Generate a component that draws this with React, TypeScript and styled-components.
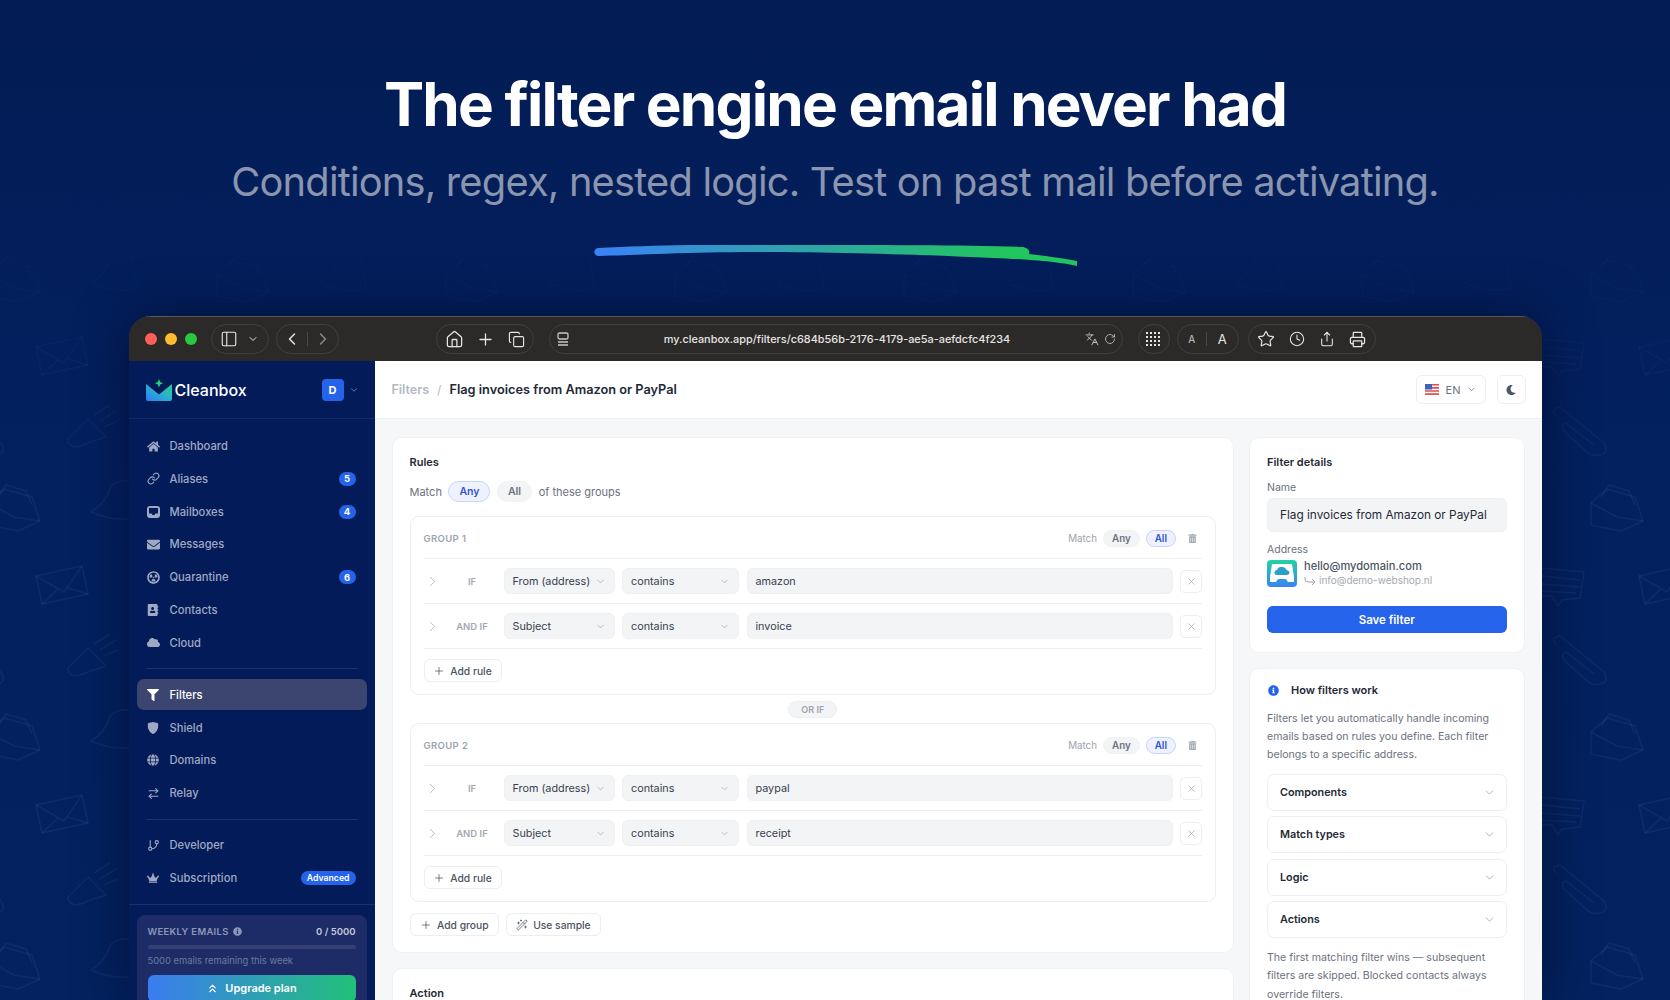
import React from "react";
import styled, { createGlobalStyle } from "styled-components";
import {
  ChevronDown,
  ChevronLeft,
  ChevronRight,
  Clock,
  Copy,
  GitBranch,
  House,
  Languages,
  Link,
  PanelLeft,
  Plus,
  Printer,
  RotateCw,
  Share,
  Star,
  WandSparkles,
  X,
  ArrowRightLeft,
  ChevronsUp,
} from "lucide-react";
import {
  FaAddressBook,
  FaCloud,
  FaCrown,
  FaEnvelope,
  FaFilter,
  FaGlobe,
  FaHome,
  FaInfoCircle,
  FaMoon,
  FaRadiationAlt,
  FaTrashAlt,
} from "react-icons/fa";
import { BsShieldFill } from "react-icons/bs";

const GlobalStyle = createGlobalStyle`
  html, body {
    margin: 0;
    padding: 0;
    background: #03205f;
  }
  * {
    box-sizing: border-box;
  }
`;

const MailboxIcon = () => (
  <svg width="13" height="12" viewBox="0 0 13 12" fill="currentColor">
    <path
      fillRule="evenodd"
      d="M3 0 H10 Q13 0 13 3 V9 Q13 12 10 12 H3 Q0 12 0 9 V3 Q0 0 3 0 Z M2 2 V7.5 H4.5 L5.5 9 H7.5 L8.5 7.5 H11 V2 Z"
    />
  </svg>
);

const navTop = [
  { label: "Dashboard", icon: <FaHome size={13} /> },
  { label: "Aliases", icon: <Link size={13} strokeWidth={2} />, badge: "5" },
  { label: "Mailboxes", icon: <MailboxIcon />, badge: "4" },
  { label: "Messages", icon: <FaEnvelope size={13} /> },
  { label: "Quarantine", icon: <FaRadiationAlt size={13} />, badge: "6" },
  { label: "Contacts", icon: <FaAddressBook size={12} /> },
  { label: "Cloud", icon: <FaCloud size={13} /> },
];

const navMid = [
  { label: "Filters", icon: <FaFilter size={12} />, active: true },
  { label: "Shield", icon: <BsShieldFill size={12} /> },
  { label: "Domains", icon: <FaGlobe size={12} /> },
  { label: "Relay", icon: <ArrowRightLeft size={13} strokeWidth={2} /> },
];

const groups = [
  {
    title: "GROUP 1",
    rules: [
      { label: "IF", field: "From (address)", value: "amazon" },
      { label: "AND IF", field: "Subject", value: "invoice" },
    ],
  },
  {
    title: "GROUP 2",
    rules: [
      { label: "IF", field: "From (address)", value: "paypal" },
      { label: "AND IF", field: "Subject", value: "receipt" },
    ],
  },
];

const EnvelopeGlyph = () => (
  <g>
    <path d="M-26 -10 L20 -20 L26 8 L-20 18 Z" />
    <path d="M-26 -10 L2 6 L20 -20 M-20 18 L-4 3 M26 8 L6 2" />
  </g>
);

const MegaphoneGlyph = () => (
  <g>
    <path d="M-24 6 L-4 -14 L14 4 Q0 8 -14 14 Q-24 14 -24 6 Z" />
    <path d="M2 -18 L18 -28 M8 -12 L24 -22 M12 -6 L26 -12" />
  </g>
);

const MailOpenGlyph = () => (
  <g>
    <path d="M-24 -6 L-24 16 L6 22 L28 12 L20 -12 L-8 -20 Z" />
    <path d="M-24 -6 L2 8 L28 12 M-14 -12 L-6 -24 L14 -18 L20 -4" />
  </g>
);

const BellGlyph = () => (
  <g>
    <path d="M-22 12 Q-8 4 -2 -14 Q8 -22 18 -18 L24 18 Q0 22 -22 12 Z" />
  </g>
);

const StackGlyph = () => (
  <g>
    <path d="M-22 -16 L22 -12 L18 14 L0 16 L-4 22 L-10 12 L-24 12 Z" />
    <path d="M-20 -8 L18 -4 M-20 0 L18 3 M-20 7 L14 9" />
  </g>
);

const ClipGlyph = () => (
  <path d="M-24 -20 Q-30 -26 -20 -28 L24 8 Q30 18 20 20 Q12 22 6 16 L-16 -4 Q-20 -10 -14 -12 L14 10" />
);

const Backdrop = () => (
  <PatternLayer aria-hidden width="1670" height="1000" viewBox="0 0 1670 1000">
    <defs>
      <linearGradient id="patternFade" x1="0" y1="0" x2="0" y2="1">
        <stop offset="0.18" stopColor="#fff" stopOpacity="0" />
        <stop offset="0.32" stopColor="#fff" stopOpacity="0.4" />
        <stop offset="0.5" stopColor="#fff" stopOpacity="1" />
      </linearGradient>
      <mask id="patternMask">
        <rect width="1670" height="1000" fill="url(#patternFade)" />
      </mask>
      <pattern
        id="mailPattern"
        x="150"
        y="320"
        width="229"
        height="229"
        patternUnits="userSpaceOnUse"
      >
        <g fill="none" stroke="#8fb0ff" strokeOpacity="0.075" strokeWidth="1.5" strokeLinejoin="round">
          <g transform="translate(38 35)">
            <StackGlyph />
          </g>
          <g transform="translate(56 115)">
            <ClipGlyph />
          </g>
          <g transform="translate(91 189)">
            <MailOpenGlyph />
          </g>
          <g transform="translate(141 37)">
            <EnvelopeGlyph />
          </g>
          <g transform="translate(171 113)">
            <MegaphoneGlyph />
          </g>
          <g transform="translate(192 180)">
            <BellGlyph />
          </g>
        </g>
      </pattern>
    </defs>
    <rect width="1670" height="1000" fill="url(#mailPattern)" mask="url(#patternMask)" />
  </PatternLayer>
);

const Swoosh = () => (
  <SwooshSvg width="486" height="22" viewBox="0 0 486 22">
    <defs>
      <linearGradient id="swooshFill" x1="0" y1="0" x2="1" y2="0">
        <stop offset="0" stopColor="#3b82f6" />
        <stop offset="0.85" stopColor="#22c55e" />
      </linearGradient>
    </defs>
    <path
      fill="url(#swooshFill)"
      d="M5 3 C60 0 130 -1 200 0 C280 0 380 0 430 2 C436 3 437 7 436 9 C452 11 470 13 484 16 L484 21 C470 18 450 15 400 13 C340 10 240 7 160 7 C100 7 40 10 6 11 C0 11 0 4 5 3 Z"
    />
  </SwooshSvg>
);

const CleanboxLogo = () => (
  <svg width="26" height="22" viewBox="0 0 26 22">
    <defs>
      <linearGradient id="logoFill" x1="0" y1="1" x2="1" y2="0">
        <stop offset="0" stopColor="#2f7cf6" />
        <stop offset="0.6" stopColor="#2ab8c8" />
        <stop offset="1" stopColor="#27d17f" />
      </linearGradient>
    </defs>
    <path
      fill="url(#logoFill)"
      d="M0 5 L13 15.5 L26 5 V20 Q26 22 24 22 H2 Q0 22 0 20 Z"
    />
    <path fill="#27d17f" d="M13 0 L14.2 3 L17 4.2 L14.2 5.4 L13 8.4 L11.8 5.4 L9 4.2 L11.8 3 Z" />
  </svg>
);

const InboxAvatar = () => (
  <svg width="30" height="27" viewBox="0 0 30 27">
    <defs>
      <linearGradient id="avatarFill" x1="0" y1="0" x2="0" y2="1">
        <stop offset="0" stopColor="#23d3a0" />
        <stop offset="0.6" stopColor="#2fa3d6" />
        <stop offset="1" stopColor="#3b82f6" />
      </linearGradient>
    </defs>
    <rect width="30" height="27" rx="4" fill="url(#avatarFill)" />
    <path
      fill="#fff"
      d="M5 4 H25 L27 17 V22 H21 L19 19 H11 L9 22 H3 V17 Z"
    />
    <path
      fill="#2b9fc9"
      d="M10 15 Q7 15 7.5 12 Q8 10 10 10 Q11 6.5 15 7 Q18.5 7 19.5 10 Q22.5 10.5 22.5 13 Q22 15 20 15 Z"
    />
  </svg>
);

const UsFlag = () => (
  <svg width="14" height="11" viewBox="0 0 14 11">
    <rect width="14" height="11" rx="1" fill="#f3f4f6" />
    <path fill="#e0524f" d="M0 0h14v1.6H0zM0 3.1h14v1.6H0zM0 6.2h14v1.6H0zM0 9.3h14V11H0z" />
    <rect width="7" height="5.5" fill="#3f63b8" />
  </svg>
);

const ReaderIcon = () => (
  <svg width="14" height="15" viewBox="0 0 14 15" fill="none" stroke="#c9c7c4" strokeWidth="1.3">
    <rect x="2" y="1" width="10" height="6" rx="1.5" />
    <path d="M2 10h10M2 13h10" />
  </svg>
);

const GridDots = () => (
  <svg width="15" height="15" viewBox="0 0 15 15" fill="#e7e5e3">
    {[1, 5, 9, 13].flatMap((y) =>
      [1, 5, 9, 13].map((x) => <rect key={`${x}-${y}`} x={x - 1} y={y - 1} width="2" height="2" />)
    )}
  </svg>
);

const ReturnHook = () => (
  <svg width="12" height="10" viewBox="0 0 12 10" fill="none" stroke="#9ca3af" strokeWidth="1">
    <path d="M1 1 V3 Q1 6 4 6 H11 M8 3 L11 6 L8 9" />
  </svg>
);

const TitleBar = () => (
  <Chrome>
    <Lights>
      <Light $color="#ff5f57" />
      <Light $color="#febc2e" />
      <Light $color="#28c840" />
    </Lights>
    <ChromePill $width={58}>
      <PanelLeft size={18} strokeWidth={1.5} />
      <ChevronDown size={12} strokeWidth={2} />
    </ChromePill>
    <ChromePill $width={63}>
      <ChevronLeft size={20} strokeWidth={1.8} />
      <PillRule />
      <ChevronRight size={20} strokeWidth={1.8} color="#8b8986" />
    </ChromePill>
    <ChromeSpacer />
    <SpreadPill $width={98}>
      <House size={19} strokeWidth={1.6} />
      <Plus size={19} strokeWidth={1.6} />
      <Copy size={17} strokeWidth={1.6} />
    </SpreadPill>
    <UrlBar>
      <ReaderIcon />
      <UrlText>my.cleanbox.app/filters/c684b56b-2176-4179-ae5a-aefdcfc4f234</UrlText>
      <UrlTools>
        <Languages size={14} strokeWidth={1.6} />
        <RotateCw size={12} strokeWidth={1.6} />
      </UrlTools>
    </UrlBar>
    <ChromePill $width={32}>
      <GridDots />
    </ChromePill>
    <ChromePill $width={62}>
      <SmallA>A</SmallA>
      <PillRule />
      <LargeA>A</LargeA>
    </ChromePill>
    <ToolsPill $width={128}>
      <Star size={18} strokeWidth={1.6} />
      <Clock size={16} strokeWidth={1.6} />
      <Share size={16} strokeWidth={1.6} />
      <Printer size={17} strokeWidth={1.8} />
    </ToolsPill>
  </Chrome>
);

const Sidebar = () => (
  <Side>
    <SideHead>
      <CleanboxLogo />
      <Brand>Cleanbox</Brand>
      <Avatar>D</Avatar>
      <ChevronDown size={10} strokeWidth={2} color="#7f8cb0" />
    </SideHead>
    <NavList $first>
      {navTop.map((item) => (
        <NavItem key={item.label}>
          <NavIcon>{item.icon}</NavIcon>
          {item.label}
          {item.badge && <NavBadge>{item.badge}</NavBadge>}
        </NavItem>
      ))}
    </NavList>
    <NavRule />
    <NavList>
      {navMid.map((item) => (
        <NavItem key={item.label} $active={item.active}>
          <NavIcon>{item.icon}</NavIcon>
          {item.label}
        </NavItem>
      ))}
    </NavList>
    <NavRule />
    <NavList>
      <NavItem>
        <NavIcon>
          <GitBranch size={13} strokeWidth={2} />
        </NavIcon>
        Developer
      </NavItem>
      <NavItem>
        <NavIcon>
          <FaCrown size={12} />
        </NavIcon>
        Subscription
        <PlanBadge>Advanced</PlanBadge>
      </NavItem>
    </NavList>
    <FootRule />
    <UsageCard>
      <UsageRow>
        <UsageLabel>
          WEEKLY EMAILS <FaInfoCircle size={9} />
        </UsageLabel>
        <UsageCount>0 / 5000</UsageCount>
      </UsageRow>
      <UsageTrack />
      <UsageNote>5000 emails remaining this week</UsageNote>
      <UpgradeButton>
        <ChevronsUp size={13} strokeWidth={2} />
        Upgrade plan
      </UpgradeButton>
    </UsageCard>
  </Side>
);

const RuleGroup = ({ title, rules }: (typeof groups)[number]) => (
  <Group>
    <GroupHead>
      <GroupTitle>{title}</GroupTitle>
      <GroupMatch>Match</GroupMatch>
      <MiniPill>Any</MiniPill>
      <MiniPill $active>All</MiniPill>
      <TrashSlot>
        <FaTrashAlt size={9} />
      </TrashSlot>
    </GroupHead>
    {rules.map((rule) => (
      <RuleRow key={rule.value}>
        <RuleChevron>
          <ChevronRight size={21} strokeWidth={1} />
        </RuleChevron>
        <RuleLabel>{rule.label}</RuleLabel>
        <SelectBox>
          {rule.field}
          <ChevronDown size={11} strokeWidth={1.5} />
        </SelectBox>
        <SelectBox>
          contains
          <ChevronDown size={11} strokeWidth={1.5} />
        </SelectBox>
        <ValueBox>{rule.value}</ValueBox>
        <RemoveButton>
          <X size={11} strokeWidth={1.5} />
        </RemoveButton>
      </RuleRow>
    ))}
    <AddRule>
      <Plus size={12} strokeWidth={1.5} />
      Add rule
    </AddRule>
  </Group>
);

const App = () => (
  <>
    <GlobalStyle />
    <Page>
      <Backdrop />
      <Title>The filter engine email never had</Title>
      <Subtitle>Conditions, regex, nested logic. Test on past mail before activating.</Subtitle>
      <Swoosh />
      <Window>
        <TitleBar />
        <WindowBody>
          <Sidebar />
          <Main>
            <TopBar>
              <Crumb>Filters</Crumb>
              <CrumbSlash>/</CrumbSlash>
              <CrumbCurrent>Flag invoices from Amazon or PayPal</CrumbCurrent>
              <LangButton>
                <UsFlag />
                EN
                <ChevronDown size={9} strokeWidth={2} />
              </LangButton>
              <MoonButton>
                <FaMoon size={10} />
              </MoonButton>
            </TopBar>
            <Content>
              <LeftColumn>
                <Panel>
                  <PanelTitle>Rules</PanelTitle>
                  <MatchRow>
                    Match
                    <MatchPill $active>Any</MatchPill>
                    <MatchPill>All</MatchPill>
                    of these groups
                  </MatchRow>
                  <RuleGroup {...groups[0]} />
                  <OrSlot>
                    <OrPill>OR IF</OrPill>
                  </OrSlot>
                  <RuleGroup {...groups[1]} />
                  <PanelActions>
                    <GhostButton>
                      <Plus size={12} strokeWidth={1.5} />
                      Add group
                    </GhostButton>
                    <GhostButton>
                      <WandSparkles size={12} strokeWidth={1.5} />
                      Use sample
                    </GhostButton>
                  </PanelActions>
                </Panel>
                <Panel>
                  <PanelTitle>Action</PanelTitle>
                </Panel>
              </LeftColumn>
              <RightColumn>
                <Panel>
                  <PanelTitle>Filter details</PanelTitle>
                  <FieldLabel>Name</FieldLabel>
                  <NameInput>Flag invoices from Amazon or PayPal</NameInput>
                  <AddressLabel>Address</AddressLabel>
                  <AddressRow>
                    <InboxAvatar />
                    <div>
                      <AddressMain>hello@mydomain.com</AddressMain>
                      <AddressSub>
                        <ReturnHook />
                        info@demo-webshop.nl
                      </AddressSub>
                    </div>
                  </AddressRow>
                  <SaveButton>Save filter</SaveButton>
                </Panel>
                <Panel>
                  <HowTitle>
                    <FaInfoCircle size={11} color="#2563eb" />
                    How filters work
                  </HowTitle>
                  <HowText>
                    Filters let you automatically handle incoming emails based on rules you define. Each
                    filter belongs to a specific address.
                  </HowText>
                  <AccordionList>
                    {["Components", "Match types", "Logic", "Actions"].map((name) => (
                      <AccordionItem key={name}>
                        {name}
                        <ChevronDown size={13} strokeWidth={1.5} />
                      </AccordionItem>
                    ))}
                  </AccordionList>
                  <HowText>
                    The first matching filter wins — subsequent filters are skipped. Blocked contacts
                    always override filters.
                  </HowText>
                </Panel>
              </RightColumn>
            </Content>
          </Main>
        </WindowBody>
      </Window>
    </Page>
  </>
);

export default App;

const Page = styled.div`
  position: relative;
  width: 1670px;
  height: 1000px;
  overflow: hidden;
  display: flex;
  flex-direction: column;
  align-items: center;
  padding-top: 67px;
  background: linear-gradient(180deg, #031c55 0%, #03205f 45%, #03225f 100%);
  font-family: Inter, "Liberation Sans", sans-serif;
`;
const PatternLayer = styled.svg`
  position: absolute;
  top: 0;
  left: 0;
`;
const Title = styled.h1`
  position: relative;
  margin: 0;
  font-size: 60.2px;
  line-height: 76px;
  font-weight: 700;
  letter-spacing: -0.03em;
  color: #fff;
`;
const Subtitle = styled.p`
  position: relative;
  margin: 15px 0 0;
  font-size: 39.8px;
  line-height: 48px;
  font-weight: 400;
  letter-spacing: -0.02em;
  color: #8a95b0;
`;
const SwooshSvg = styled.svg`
  position: relative;
  display: block;
  flex: none;
  margin-top: 39px;
  margin-left: 2px;
`;
const Window = styled.div`
  position: relative;
  flex: 1;
  min-height: 0;
  width: 1413px;
  margin-top: 49px;
  display: flex;
  flex-direction: column;
  border-radius: 22px 22px 0 0;
  overflow: hidden;
  box-shadow: 0 0 50px rgba(0, 5, 30, 0.55), inset 0 1px 0 rgba(255, 255, 255, 0.25);
`;
const Chrome = styled.div`
  flex: none;
  height: 45px;
  display: flex;
  align-items: center;
  gap: 7px;
  padding: 0 166px 0 16px;
  background: #2c2a28;
  border-top: 1px solid #5a5855;
  color: #e7e5e3;
`;
const Lights = styled.div`
  display: flex;
  gap: 8px;
  margin-right: 7px;
`;
const Light = styled.span<{ $color: string }>`
  width: 12px;
  height: 12px;
  border-radius: 50%;
  background: ${(p) => p.$color};
`;
const ChromePill = styled.div<{ $width: number }>`
  flex: none;
  width: ${(p) => p.$width}px;
  height: 30px;
  display: flex;
  align-items: center;
  justify-content: space-evenly;
  border: 1px solid rgba(255, 255, 255, 0.1);
  border-radius: 15px;
`;
const SpreadPill = styled(ChromePill)`
  justify-content: space-between;
  padding: 0 8px;
`;
const ToolsPill = styled(SpreadPill)`
  margin-left: 2px;
`;
const PillRule = styled.span`
  width: 1px;
  height: 14px;
  background: rgba(255, 255, 255, 0.15);
`;
const ChromeSpacer = styled.div`
  width: 83px;
`;
const UrlBar = styled.div`
  flex: 1;
  height: 30px;
  margin: 0 8px;
  display: flex;
  align-items: center;
  padding: 0 6px;
  border: 1px solid rgba(255, 255, 255, 0.1);
  border-radius: 15px;
`;
const UrlText = styled.span`
  flex: 1;
  margin-left: 20px;
  text-align: center;
  font-size: 10.9px;
  font-weight: 500;
  color: #e7e5e3;
`;
const UrlTools = styled.div`
  display: flex;
  align-items: center;
  gap: 5px;
  color: #c9c7c4;
`;
const SmallA = styled.span`
  font-size: 10px;
  color: #c9c7c4;
`;
const LargeA = styled.span`
  font-size: 13px;
  color: #e7e5e3;
`;
const WindowBody = styled.div`
  flex: 1;
  min-height: 0;
  display: flex;
`;
const Side = styled.aside`
  flex: none;
  width: 246px;
  display: flex;
  flex-direction: column;
  background: #031b59;
  color: #a3adc8;
`;
const SideHead = styled.div`
  flex: none;
  height: 58px;
  display: flex;
  align-items: center;
  padding: 0 16px 0 17px;
  border-bottom: 1px solid #12296a;
`;
const Brand = styled.span`
  margin-left: 3px;
  flex: 1;
  font-size: 16px;
  font-weight: 500;
  color: #fff;
`;
const Avatar = styled.span`
  width: 22px;
  height: 22px;
  margin-right: 5px;
  display: flex;
  align-items: center;
  justify-content: center;
  border-radius: 4px;
  background: #2563eb;
  color: #fff;
  font-size: 11px;
  font-weight: 700;
`;
const NavList = styled.div<{ $first?: boolean }>`
  flex: none;
  display: flex;
  flex-direction: column;
  gap: 1.8px;
  padding: ${(p) => (p.$first ? "11.5px" : "0")} 8px 0;
`;
const NavItem = styled.div<{ $active?: boolean }>`
  height: 31px;
  display: flex;
  align-items: center;
  padding: 0 11px 0 10px;
  border-radius: 7px;
  font-size: 11.2px;
  font-weight: 500;
  color: ${(p) => (p.$active ? "#fff" : "#a0a9c3")};
  background: ${(p) => (p.$active ? "#3b4570" : "transparent")};
`;
const NavIcon = styled.span`
  width: 13px;
  margin-right: 10px;
  display: flex;
  align-items: center;
  justify-content: center;
`;
const NavBadge = styled.span`
  margin-left: auto;
  width: 17px;
  height: 14px;
  display: flex;
  align-items: center;
  justify-content: center;
  border-radius: 7px;
  background: #2563eb;
  color: #fff;
  font-size: 9.5px;
  font-weight: 700;
`;
const PlanBadge = styled.span`
  margin-left: auto;
  height: 14px;
  padding: 0 6px;
  display: flex;
  align-items: center;
  border-radius: 7px;
  background: #2563eb;
  color: #fff;
  font-size: 8.7px;
  font-weight: 600;
`;
const NavRule = styled.div`
  flex: none;
  height: 1px;
  margin: 10px 17px;
  background: #1a3070;
`;
const FootRule = styled.div`
  flex: none;
  height: 1px;
  margin-top: 11px;
  background: #1a3070;
`;
const UsageCard = styled.div`
  flex: none;
  margin: 10px 8px 0;
  padding: 10px 11px 0;
  height: 110px;
  border-radius: 8px;
  background: #1d2c66;
`;
const UsageRow = styled.div`
  display: flex;
  justify-content: space-between;
  align-items: center;
  height: 12px;
`;
const UsageLabel = styled.span`
  display: flex;
  align-items: center;
  gap: 4px;
  font-size: 9.4px;
  font-weight: 600;
  letter-spacing: 0.04em;
  color: #8d98b9;
`;
const UsageCount = styled.span`
  font-size: 9.5px;
  font-weight: 600;
  color: #c4cadb;
`;
const UsageTrack = styled.div`
  height: 4px;
  margin-top: 7.5px;
  border-radius: 2px;
  background: #343f74;
`;
const UsageNote = styled.div`
  margin-top: 5px;
  font-size: 9.4px;
  line-height: 14px;
  color: #6e7aa0;
`;
const UpgradeButton = styled.div`
  height: 27px;
  margin-top: 7px;
  display: flex;
  align-items: center;
  justify-content: center;
  gap: 6px;
  border-radius: 6px;
  background: linear-gradient(90deg, #3b7cf0, #22c07a);
  color: #fff;
  font-size: 11px;
  font-weight: 600;
`;
const Main = styled.main`
  flex: 1;
  min-width: 0;
  display: flex;
  flex-direction: column;
  background: #f6f7f9;
`;
const TopBar = styled.header`
  flex: none;
  height: 58px;
  display: flex;
  align-items: center;
  padding: 0 16px 0 17px;
  background: #fff;
  border-bottom: 1px solid #eef0f3;
`;
const Crumb = styled.span`
  font-size: 12.5px;
  font-weight: 600;
  color: #b4b9c2;
`;
const CrumbSlash = styled.span`
  margin: 0 8px;
  font-size: 12px;
  color: #b4b9c2;
`;
const CrumbCurrent = styled.span`
  flex: 1;
  font-size: 12.75px;
  font-weight: 600;
  color: #1f2937;
`;
const LangButton = styled.div`
  width: 70px;
  height: 29px;
  display: flex;
  align-items: center;
  justify-content: center;
  gap: 7px;
  border: 1px solid #eceef1;
  border-radius: 6px;
  font-size: 11px;
  color: #6b7280;
`;
const MoonButton = styled.div`
  width: 29px;
  height: 29px;
  margin-left: 11px;
  display: flex;
  align-items: center;
  justify-content: center;
  border: 1px solid #eceef1;
  border-radius: 6px;
  color: #4b5563;
`;
const Content = styled.div`
  flex: 1;
  min-height: 0;
  display: flex;
  gap: 15px;
  padding: 18px 17px 0;
`;
const LeftColumn = styled.div`
  flex: 1;
  min-width: 0;
  display: flex;
  flex-direction: column;
  gap: 15px;
`;
const RightColumn = styled.div`
  flex: none;
  width: 275.5px;
  display: flex;
  flex-direction: column;
  gap: 15px;
`;
const Panel = styled.section`
  padding: 16px 17px;
  background: #fff;
  border: 1px solid #eff1f4;
  border-radius: 10px;
`;
const PanelTitle = styled.h2`
  margin: 0;
  font-size: 11px;
  line-height: 16px;
  font-weight: 600;
  color: #1f2937;
`;
const MatchRow = styled.div`
  height: 21px;
  margin-top: 11px;
  display: flex;
  align-items: center;
  gap: 6.5px;
  font-size: 11px;
  color: #6b7280;
`;
const MatchPill = styled.span<{ $active?: boolean }>`
  height: 21px;
  padding: 0 10px;
  display: flex;
  align-items: center;
  border-radius: 11px;
  font-size: 10.5px;
  font-weight: 600;
  border: 1px solid ${(p) => (p.$active ? "#c7d2fe" : "#f0f1f3")};
  background: ${(p) => (p.$active ? "#eef2ff" : "#f3f4f6")};
  color: ${(p) => (p.$active ? "#2f55d4" : "#6b7280")};
`;
const Group = styled.div`
  margin-top: 14px;
  padding: 0 13px;
  background: #fff;
  border: 1px solid #eceef1;
  border-radius: 9px;
`;
const GroupHead = styled.div`
  height: 42px;
  padding-top: 2px;
  display: flex;
  align-items: center;
  gap: 6px;
  border-bottom: 1px solid #eceef1;
`;
const GroupTitle = styled.span`
  flex: 1;
  font-size: 9.5px;
  font-weight: 600;
  letter-spacing: 0.04em;
  color: #9ca3af;
`;
const GroupMatch = styled.span`
  font-size: 9.8px;
  color: #9ca3af;
`;
const MiniPill = styled.span<{ $active?: boolean }>`
  height: 17px;
  padding: 0 8px;
  display: flex;
  align-items: center;
  border-radius: 9px;
  font-size: 9.8px;
  font-weight: 600;
  border: 1px solid ${(p) => (p.$active ? "#c7d2fe" : "#f0f1f3")};
  background: ${(p) => (p.$active ? "#eef2ff" : "#f3f4f6")};
  color: ${(p) => (p.$active ? "#2f55d4" : "#6b7280")};
`;
const TrashSlot = styled.span`
  width: 20px;
  display: flex;
  justify-content: center;
  color: #a3a9b3;
`;
const RuleRow = styled.div`
  height: 45px;
  display: grid;
  grid-template-columns: 17px 48px 111px 117px 1fr 22px;
  column-gap: 7.5px;
  align-items: center;
  border-bottom: 1px solid #eceef1;
`;
const RuleChevron = styled.span`
  display: flex;
  justify-content: flex-end;
  color: #9ca3af;
`;
const RuleLabel = styled.span`
  text-align: center;
  font-size: 9.5px;
  font-weight: 600;
  color: #a3a9b3;
`;
const SelectBox = styled.div`
  height: 26px;
  display: flex;
  align-items: center;
  justify-content: space-between;
  padding: 0 8px;
  background: #f3f4f6;
  border: 1px solid #eef0f2;
  border-radius: 6px;
  font-size: 10.8px;
  white-space: nowrap;
  color: #374151;
  svg {
    color: #9ca3af;
  }
`;
const ValueBox = styled(SelectBox)``;
const RemoveButton = styled.span`
  height: 23px;
  display: flex;
  align-items: center;
  justify-content: center;
  background: #fff;
  border: 1px solid #eceef1;
  border-radius: 5px;
  color: #9ca3af;
`;
const AddRule = styled.div`
  width: 78px;
  height: 23px;
  margin: 10px 0 12px;
  display: flex;
  align-items: center;
  justify-content: center;
  gap: 5px;
  background: #fff;
  border: 1px solid #eceef1;
  border-radius: 6px;
  font-size: 10.3px;
  font-weight: 500;
  color: #4b5563;
`;
const OrSlot = styled.div`
  height: 28px;
  display: flex;
  align-items: center;
  justify-content: center;
  & + ${Group} {
    margin-top: 0;
  }
`;
const OrPill = styled.span`
  height: 17px;
  padding: 0 12px;
  display: flex;
  align-items: center;
  border-radius: 9px;
  background: #f3f4f6;
  border: 1px solid #eceef1;
  font-size: 9px;
  font-weight: 600;
  color: #9ca3af;
`;
const PanelActions = styled.div`
  display: flex;
  gap: 7px;
  margin-top: 11px;
`;
const GhostButton = styled.div`
  height: 23px;
  padding: 0 9px;
  display: flex;
  align-items: center;
  gap: 5.5px;
  background: #fff;
  border: 1px solid #eceef1;
  border-radius: 6px;
  font-size: 10.3px;
  font-weight: 500;
  color: #4b5563;
`;
const FieldLabel = styled.div`
  margin-top: 11px;
  font-size: 10.5px;
  line-height: 14px;
  color: #6b7280;
`;
const NameInput = styled.div`
  height: 34px;
  margin-top: 3px;
  display: flex;
  align-items: center;
  padding: 0 12px;
  background: #f3f4f6;
  border: 1px solid #eff0f2;
  border-radius: 6px;
  font-size: 11.8px;
  white-space: nowrap;
  color: #1f2937;
`;
const AddressLabel = styled(FieldLabel)`
  margin-top: 11px;
`;
const AddressRow = styled.div`
  display: flex;
  align-items: flex-start;
  gap: 7px;
  margin-top: 3px;
`;
const AddressMain = styled.div`
  font-size: 11.1px;
  line-height: 13px;
  font-weight: 500;
  color: #4b5563;
`;
const AddressSub = styled.div`
  display: flex;
  align-items: center;
  gap: 3px;
  font-size: 10px;
  line-height: 15px;
  color: #a3a9b3;
`;
const SaveButton = styled.div`
  height: 27px;
  margin: 18px 0 3px;
  display: flex;
  align-items: center;
  justify-content: center;
  border-radius: 6px;
  background: #2563eb;
  color: #fff;
  font-size: 11.5px;
  font-weight: 600;
`;
const HowTitle = styled.h3`
  margin: -3px 0 0;
  height: 16px;
  display: flex;
  align-items: center;
  gap: 12px;
  padding-left: 1px;
  font-size: 11px;
  font-weight: 600;
  color: #1f2937;
`;
const HowText = styled.p`
  margin: 12px 0 0;
  font-size: 10.6px;
  line-height: 18.2px;
  color: #6b7280;
`;
const AccordionList = styled.div`
  display: flex;
  flex-direction: column;
  gap: 5.5px;
  margin: 9px 0 -1px;
`;
const AccordionItem = styled.div`
  height: 37px;
  display: flex;
  align-items: center;
  justify-content: space-between;
  padding: 0 10px 0 12px;
  background: #fff;
  border: 1px solid #eceef1;
  border-radius: 7px;
  font-size: 10.8px;
  font-weight: 600;
  color: #1f2937;
  svg {
    color: #9ca3af;
  }
`;
